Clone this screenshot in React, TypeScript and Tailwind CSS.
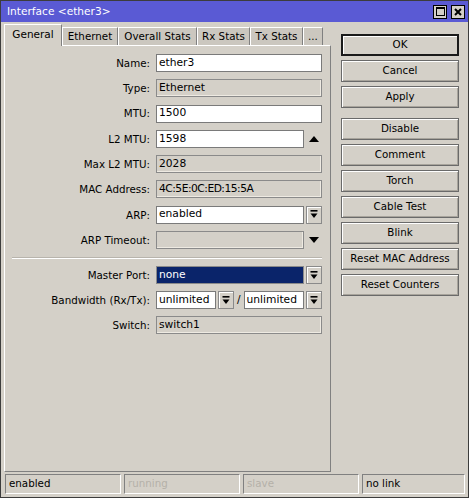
import React from 'react'

const font = { fontFamily: '"DejaVu Sans", Verdana, sans-serif' }

function DropIcon() {
  return (
    <svg width="8" height="9" viewBox="0 0 8 9">
      <rect x="0.5" y="0" width="7" height="1.6" fill="#000" />
      <path d="M0.5 3.5 H7.5 L4 8 Z" fill="#000" />
    </svg>
  )
}

function DropButton() {
  return (
    <div className="flex h-[18px] w-[16px] shrink-0 items-center justify-center border border-[#8a8a8a] bg-[#d4d0c8] shadow-[inset_1px_1px_0_#fff]">
      <DropIcon />
    </div>
  )
}

function Arrow({ up }: { up?: boolean }) {
  return (
    <div className="flex h-[18px] w-[16px] shrink-0 items-center justify-center">
      <svg width="10" height="6" viewBox="0 0 10 6">
        {up ? <path d="M0 6 H10 L5 0 Z" fill="#000" /> : <path d="M0 0 H10 L5 6 Z" fill="#000" />}
      </svg>
    </div>
  )
}

function Field({
  value,
  readOnly,
  selected,
  className = 'w-[166px]',
}: {
  value?: string
  readOnly?: boolean
  selected?: boolean
  className?: string
}) {
  const tone = selected
    ? 'bg-[#0a246a] text-white border-[#8a8a8a]'
    : readOnly
      ? 'bg-[#d4d0c8] text-black border-[#8a8a8a] shadow-[inset_-1px_-1px_0_#eeeae2]'
      : 'bg-white text-black border-[#7a7a7a]'
  return (
    <div className={`flex h-[18px] shrink-0 items-center border px-[2px] text-[10.7px] leading-none ${tone} ${className}`}>
      {value}
    </div>
  )
}

function Row({ label, children }: { label: string; children: React.ReactNode }) {
  return (
    <div className="flex h-[18px] items-center">
      <div className="w-[145px] shrink-0 text-right text-[10.3px] leading-none text-black">{label}</div>
      <div className="ml-[6px] flex items-center gap-[2px]">{children}</div>
    </div>
  )
}

function Tab({ label, w, active }: { label: string; w: string; active?: boolean }) {
  if (active) {
    return (
      <div className={`relative z-10 -mb-px flex h-[22px] ${w} items-center justify-center border-l border-t border-r border-l-white border-t-white border-r-[#808080] bg-[#d4d0c8] pb-[1px] text-[10.5px]`}>
        {label}
      </div>
    )
  }
  return (
    <div className={`flex h-[18px] ${w} items-center justify-center border-l border-t border-r border-l-white border-t-white border-r-[#808080] bg-[#cbc7bf] pt-[1px] text-[10.3px] text-black`}>
      {label}
    </div>
  )
}

function Btn({ label, def }: { label: string; def?: boolean }) {
  return (
    <div
      className={`flex h-[22px] w-[118px] items-center justify-center bg-[#d4d0c8] text-[10.3px] text-black ${
        def
          ? 'border-2 border-[#1a1a1a] shadow-[inset_1px_1px_0_#fff]'
          : 'border border-[#6a6a6a] shadow-[inset_1px_1px_0_#fff,inset_-1px_-1px_0_#a8a49c]'
      }`}
    >
      {label}
    </div>
  )
}

function Status({ text, dim, w }: { text: string; dim?: boolean; w: string }) {
  return (
    <div
      className={`flex h-[20px] ${w} items-center border border-t-[#808080] border-l-[#808080] border-r-white border-b-white px-[3px] text-[10.3px] ${
        dim ? 'text-[#b4b0a8]' : 'text-black'
      }`}
    >
      {text}
    </div>
  )
}

export default function App() {
  return (
    <div
      className="flex h-[498px] w-[469px] flex-col border border-[#3c3c3c] bg-[#d4d0c8] text-black"
      style={font}
    >
      {/* title bar */}
      <div className="flex h-[21px] shrink-0 items-center justify-between bg-[#5a5ad4] pl-[6px] pr-[3px]">
        <span className="text-[10.6px] text-white">Interface &lt;ether3&gt;</span>
        <div className="flex items-center gap-[4px]">
          <div className="flex h-[14px] w-[14px] items-center justify-center border border-black bg-[#d4d0c8]">
            <div className="h-[9px] w-[9px] border border-black border-t-2" />
          </div>
          <div className="flex h-[14px] w-[14px] items-center justify-center border border-black bg-[#d4d0c8]">
            <svg width="8" height="8" viewBox="0 0 8 8">
              <path d="M1 1 L7 7 M7 1 L1 7" stroke="#000" strokeWidth="2" />
            </svg>
          </div>
        </div>
      </div>

      {/* body */}
      <div className="flex flex-1 pl-[3px] pt-[2px]">
        <div className="flex w-[327px] flex-col">
          <div className="flex items-end">
            <Tab label="General" w="w-[58px]" active />
            <Tab label="Ethernet" w="w-[56px]" />
            <Tab label="Overall Stats" w="w-[79px]" />
            <Tab label="Rx Stats" w="w-[53px]" />
            <Tab label="Tx Stats" w="w-[53px]" />
            <Tab label="..." w="w-[20px]" />
          </div>
          <div className="flex h-[427px] flex-col border border-l-white border-t-white border-r-[#808080] border-b-[#808080] pt-[8px]">
            <div className="flex flex-col gap-[7.3px]">
              <Row label="Name:">
                <Field value="ether3" />
              </Row>
              <Row label="Type:">
                <Field value="Ethernet" readOnly />
              </Row>
              <Row label="MTU:">
                <Field value="1500" />
              </Row>
              <Row label="L2 MTU:">
                <Field value="1598" className="w-[148px]" />
                <Arrow up />
              </Row>
              <Row label="Max L2 MTU:">
                <Field value="2028" readOnly />
              </Row>
              <Row label="MAC Address:">
                <Field value="4C:5E:0C:ED:15:5A" readOnly className="w-[166px] tracking-[-0.5px]" />
              </Row>
              <Row label="ARP:">
                <Field value="enabled" className="w-[148px]" />
                <DropButton />
              </Row>
              <Row label="ARP Timeout:">
                <Field readOnly className="w-[148px]" />
                <Arrow />
              </Row>
            </div>
            <div className="mb-[7px] ml-[7px] mt-[8px] h-[2px] w-[310px] border-t border-b border-t-[#b8b4ac] border-b-white" />
            <div className="flex flex-col gap-[7px]">
              <Row label="Master Port:">
                <Field value="none" selected className="w-[148px]" />
                <DropButton />
              </Row>
              <Row label="Bandwidth (Rx/Tx):">
                <Field value="unlimited" className="w-[60px]" />
                <DropButton />
                <span className="mx-[1px] text-[10.5px]">/</span>
                <Field value="unlimited" className="w-[60px]" />
                <DropButton />
              </Row>
              <Row label="Switch:">
                <Field value="switch1" readOnly />
              </Row>
            </div>
          </div>
        </div>

        <div className="ml-[10px] flex flex-col gap-[4px] pt-[10px]">
          <Btn label="OK" def />
          <Btn label="Cancel" />
          <Btn label="Apply" />
          <div className="h-[2px]" />
          <Btn label="Disable" />
          <Btn label="Comment" />
          <Btn label="Torch" />
          <Btn label="Cable Test" />
          <Btn label="Blink" />
          <Btn label="Reset MAC Address" />
          <Btn label="Reset Counters" />
        </div>
      </div>

      {/* status bar */}
      <div className="flex shrink-0 gap-[3px] pb-[3px] pl-[4px]">
        <Status text="enabled" w="w-[116px]" />
        <Status text="running" dim w="w-[116px]" />
        <Status text="slave" dim w="w-[116px]" />
        <Status text="no link" w="w-[103px]" />
      </div>
    </div>
  )
}
